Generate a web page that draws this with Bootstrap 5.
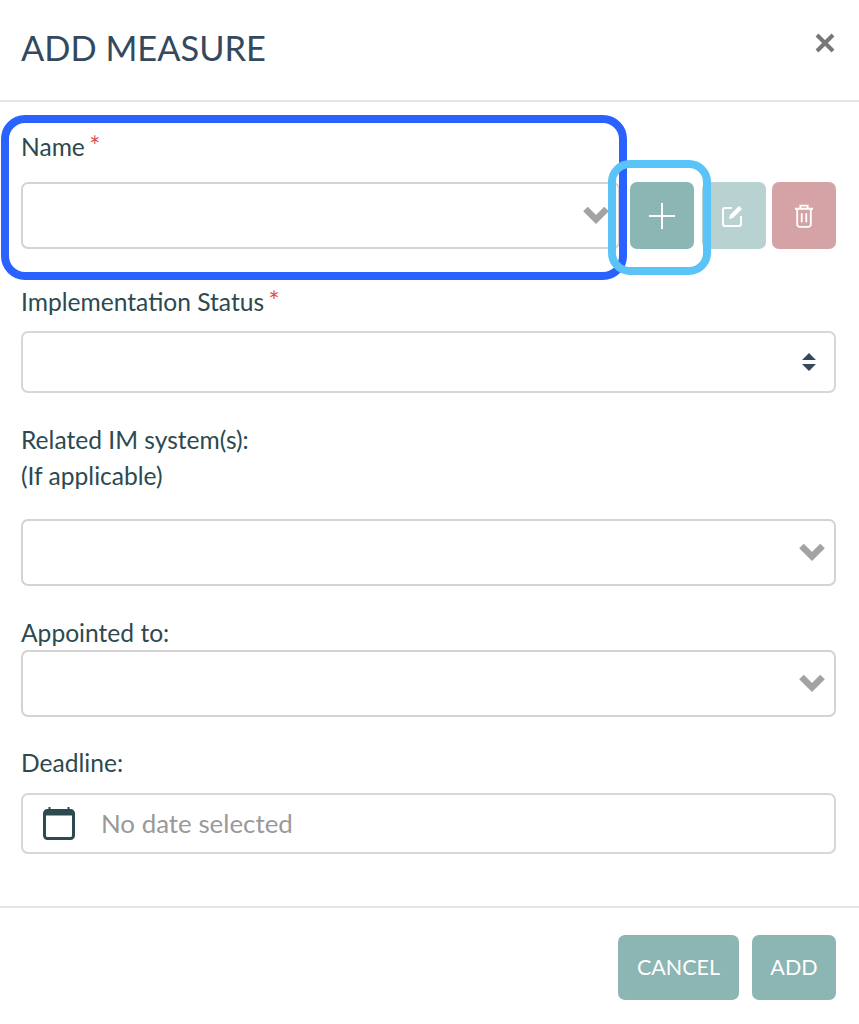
<!DOCTYPE html>
<html lang="en">
<head>
    <meta charset="UTF-8">
    <meta name="viewport" content="width=device-width, initial-scale=1.0">
    <title>Add Measure</title>
    <link href="https://cdn.jsdelivr.net/npm/bootstrap@5.3.0/dist/css/bootstrap.min.css" rel="stylesheet">
    <style>
        body {
            font-family: Lato, "Liberation Sans", sans-serif;
            color: #2c4a4f;
            background: #fff;
            margin: 0;
            font-size: 24px;
        }
        .sheet { position: relative; width: 859px; height: 1024px; overflow: hidden; }
        .sheet-head {
            height: 102px;
            padding: 28px 24px 0 21px;
            border-bottom: 2px solid #e4e5ea;
            display: flex;
            justify-content: space-between;
        }
        .sheet-head h1 {
            font-size: 34.4px;
            line-height: 40px;
            font-weight: 400;
            color: #34495e;
            margin: 0;
        }
        .close-x { margin: 5px 0 0; display: block; }
        .sheet-body { padding: 0 23px 0 21px; height: 806px; border-bottom: 2px solid #e4e5ea; }
        .lbl { display: block; font-size: 24.6px; line-height: 32px; margin: 0; color: #2c4a4f; }
        .req { color: #d9534f; font-size: 26px; line-height: 0; margin-left: -2px; }
        .fake-select {
            height: 67px;
            border: 2px solid #d3d3d3;
            border-radius: 7px;
            background: #fff;
            display: flex;
            align-items: center;
            justify-content: flex-end;
            padding-right: 9px;
        }
        .status-select {
            height: 62px;
            border: 2px solid #d2d8de;
            border-radius: 7px;
            justify-content: flex-end;
            padding-right: 17px;
        }
        .square-btn {
            width: 64px;
            height: 67px;
            border: 0;
            border-radius: 7px;
            padding: 0;
            display: flex;
            align-items: center;
            justify-content: center;
        }
        .tone-add { background: #8cb6b4; }
        .tone-edit { background: #b7d2d1; }
        .tone-del { background: #d5a3a5; }
        .date-box {
            height: 61px;
            border: 2px solid #d2d8de;
            border-radius: 7px;
            display: flex;
            align-items: center;
            padding-left: 20px;
            color: #999;
            font-size: 25.9px;
        }
        .date-box svg { margin-right: 26px; }
        .sheet-foot { display: flex; justify-content: flex-end; gap: 13px; padding: 27px 23px 0 0; }
        .foot-btn {
            height: 65px;
            border: 0;
            border-radius: 7px;
            background: #8cb6b4;
            color: #fff;
            font-size: 21.5px;
            padding: 0;
        }
        .foot-cancel { width: 121px; }
        .foot-add { width: 84px; }
        .mark-blue, .mark-sky { position: absolute; border-style: solid; pointer-events: none; }
        .mark-blue { left: 1px; top: 115px; width: 626px; height: 165px; border: 8px solid #2962ff; border-radius: 24px; }
        .mark-sky { left: 608px; top: 160px; width: 103px; height: 115px; border: 8px solid #5ac4f8; border-radius: 22px; }
    </style>
</head>
<body>
    <div class="sheet">
        <div class="sheet-head">
            <h1>ADD MEASURE</h1>
            <svg class="close-x" width="20" height="20" viewBox="0 0 20 20"><path d="M2 2 18 18M18 2 2 18" stroke="#777" stroke-width="4"/></svg>
        </div>
        <div class="sheet-body">
            <label class="lbl" style="padding-top:29px">Name <span class="req">*</span></label>
            <div class="d-flex" style="margin-top:19px">
                <div class="fake-select" style="width:599px">
                    <svg width="26" height="20" viewBox="0 0 26 20"><path d="M2.500 3 13 13.500 23.500 3" fill="none" stroke="#a3a3a3" stroke-width="6.500"/></svg>
                </div>
                <button class="square-btn tone-add" style="margin-left:10px" type="button">
                    <svg width="28" height="28" viewBox="0 0 28 28"><path d="M14 1V27M1 14H27" stroke="#fff" stroke-width="2"/></svg>
                </button>
                <button class="square-btn tone-edit" style="margin-left:8px" type="button">
                    <svg class="me-1" width="24" height="24" viewBox="0 0 24 24" fill="none"><path d="M12 4H5a2 2 0 0 0-2 2v14a2 2 0 0 0 2 2h14a2 2 0 0 0 2-2v-8" stroke="#fff" stroke-width="2"/><path d="M9 15l1-4 9-9 3 3-9 9z" fill="#fff"/></svg>
                </button>
                <button class="square-btn tone-del" style="margin-left:6px" type="button">
                    <svg width="20" height="24" viewBox="0 0 22 26" fill="none" stroke="#fff" stroke-width="2"><path d="M1 5H21M7 4V1.500H15V4M3.500 6V22a3 3 0 0 0 3 3h9a3 3 0 0 0 3-3V6M8.500 10V20M13.500 10V20"/></svg>
                </button>
            </div>
            <label class="lbl" style="margin-top:37px">Implementation Status <span class="req">*</span></label>
            <div class="fake-select status-select" style="margin-top:13px">
                <svg width="16" height="18" viewBox="0 0 16 18"><path d="M8 0 15 7H1zM8 18 1 11H15z" fill="#34495e"/></svg>
            </div>
            <label class="lbl" style="margin-top:31px">Related IM system(s):</label>
            <label class="lbl" style="margin-top:4px">(If applicable)</label>
            <div class="fake-select" style="margin-top:27px">
                <svg width="26" height="20" viewBox="0 0 26 20"><path d="M2.500 3 13 13.500 23.500 3" fill="none" stroke="#a3a3a3" stroke-width="6.500"/></svg>
            </div>
            <label class="lbl" style="margin-top:31px">Appointed to:</label>
            <div class="fake-select" style="margin-top:1px">
                <svg width="26" height="20" viewBox="0 0 26 20"><path d="M2.500 3 13 13.500 23.500 3" fill="none" stroke="#a3a3a3" stroke-width="6.500"/></svg>
            </div>
            <label class="lbl" style="margin-top:30px">Deadline:</label>
            <div class="date-box" style="margin-top:14px">
                <svg width="32" height="33" viewBox="0 0 32 33" fill="none"><rect x="1.500" y="3.500" width="29" height="28" rx="3" stroke="#2c4a4f" stroke-width="3"/><path d="M1.500 6a3 3 0 0 1 3-3H27.500a3 3 0 0 1 3 3V8H1.500z" fill="#2c4a4f" stroke="#2c4a4f"/><path d="M6.500 0V4M25.500 0V4" stroke="#2c4a4f" stroke-width="2"/></svg>
                <span>No date selected</span>
            </div>
        </div>
        <div class="sheet-foot">
            <button class="foot-btn foot-cancel" type="button">CANCEL</button>
            <button class="foot-btn foot-add" type="button">ADD</button>
        </div>
        <div class="mark-blue"></div>
        <div class="mark-sky"></div>
    </div>
    <script src="https://cdn.jsdelivr.net/npm/bootstrap@5.3.0/dist/js/bootstrap.bundle.min.js"></script>
</body>
</html>
